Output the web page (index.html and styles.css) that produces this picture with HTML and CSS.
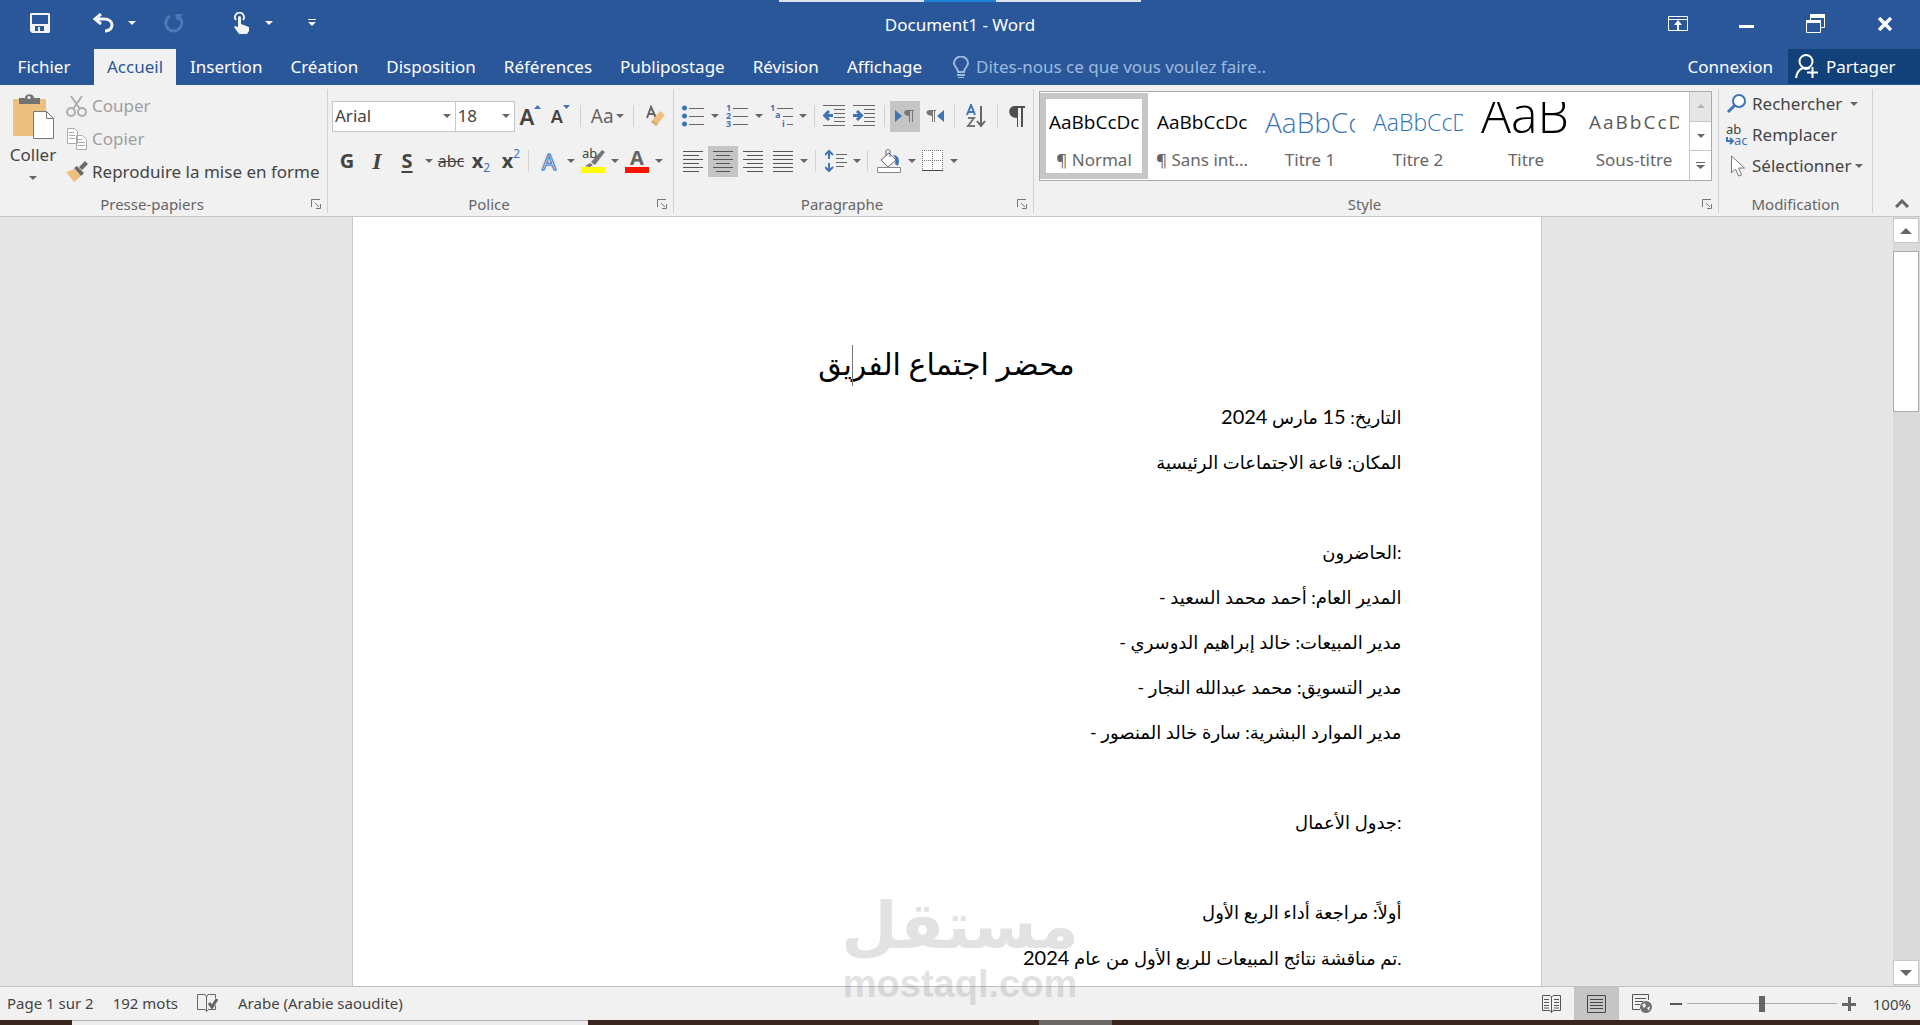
FILE: index.html
```html
<!DOCTYPE html>
<html lang="fr">
<head>
<meta charset="utf-8">
<title>Document1 - Word</title>
<link rel="stylesheet" href="styles.css">
</head>
<body>
<svg class="defs" aria-hidden="true">
  <symbol id="caret" viewBox="0 0 8 4"><path d="M0 0h8L4 4z" fill="currentColor"/></symbol>
  <symbol id="launcher" viewBox="0 0 10 10"><path d="M.5 8V.5H9M4 4l4 4M9.500 5v4.500H5" fill="none" stroke="#777"/></symbol>
</svg>

<header class="titlebar">
  <div class="peek"><i></i></div>
  <div class="quick">
    <button class="q q-save" aria-label="Enregistrer"><svg width="20" height="20" viewBox="0 0 20 20"><path fill="#f3f3f3" fill-rule="evenodd" d="M1 0h18l1 1v18l-1 1H2l-2-2V1zM2 2v9h16V2zM5 13v5h3v-4h2v4h4v-5z"/></svg></button>
    <button class="q q-undo" aria-label="Annuler"><svg width="22" height="20" viewBox="0 0 22 20"><path d="M9 1L3 6l6 5M3 6h9c11 0 10 12 1 12" fill="none" stroke="#f3f3f3" stroke-width="3"/></svg></button>
    <button class="q q-drop" aria-label="Options d'annulation"><svg width="8" height="4"><use href="#caret"/></svg></button>
    <button class="q q-redo" aria-label="Répéter" disabled><svg width="20" height="20" viewBox="0 0 20 20"><path d="M6 3a8 8 0 1 0 9 1" fill="none" stroke="#4a79b8" stroke-width="3"/><path d="M11 1h8l-6 7z" fill="#4a79b8"/></svg></button>
    <button class="q q-touch" aria-label="Mode tactile"><svg width="16" height="22" viewBox="0 0 16 22"><path d="M3 8a4.500 4.500 0 1 1 7 0" fill="none" stroke="#f3f3f3" stroke-width="2"/><path d="M5 5q1.500-2 3 0v7l8 3v4l-2 3H6l-5-7 1-1 3 1z" fill="#f3f3f3"/></svg></button>
    <button class="q q-drop2" aria-label="Options tactiles"><svg width="8" height="4"><use href="#caret"/></svg></button>
    <button class="q q-custom" aria-label="Personnaliser"><svg width="8" height="8" viewBox="0 0 8 8"><path d="M0 0h8v1H0zM0 3h8L4 7z" fill="#f3f3f3"/></svg></button>
  </div>
  <h1 class="doc-name">Document1 - Word</h1>
  <div class="window-buttons">
    <button aria-label="Options du ruban"><svg width="20" height="16" viewBox="0 0 20 16"><path d="M.5.5h19v14H.5zM0 3.500h20M10 13V6" fill="none" stroke="#fff"/><path d="M10 4l4 5h-3v5H9V9H6z" fill="#fff"/></svg></button>
    <button aria-label="Réduire"><svg width="16" height="16"><path d="M0 9h15v3H0z" fill="#fff"/></svg></button>
    <button aria-label="Restaurer"><svg width="20" height="20" viewBox="0 0 20 20"><path d="M4.500 7V1.500h14v12H15M.5 8.500h14v10H.5z" fill="none" stroke="#fff"/><path d="M4 0h15v4H4zM0 6h15v3H0z" fill="#fff"/></svg></button>
    <button aria-label="Fermer"><svg width="14" height="14"><path d="M1 1l12 12M13 1L1 13" stroke="#fff" stroke-width="3.500"/></svg></button>
  </div>
</header>

<nav class="tabs">
  <button class="tab file">Fichier</button>
  <button class="tab active">Accueil</button>
  <button class="tab">Insertion</button>
  <button class="tab">Création</button>
  <button class="tab">Disposition</button>
  <button class="tab">Références</button>
  <button class="tab">Publipostage</button>
  <button class="tab">Révision</button>
  <button class="tab">Affichage</button>
  <label class="tell"><svg width="16" height="22" viewBox="0 0 16 22"><path d="M5 16c0-4-4-5-4-9a7 6.500 0 0 1 14 0c0 4-4 5-4 9z" fill="none" stroke="#9fb9de" stroke-width="2"/><path d="M4 18h8v2H4zM5 21h6v1H5z" fill="#9fb9de"/></svg>
    <input type="text" placeholder="Dites-nous ce que vous voulez faire.." aria-label="Dites-nous ce que vous voulez faire"></label>
  <button class="connect">Connexion</button>
  <button class="share"><svg width="24" height="25" viewBox="0 0 24 25"><circle cx="11" cy="7.500" r="6.500" fill="none" stroke="#fff" stroke-width="2"/><path d="M1 24c1-7 4-9 7-10l3 1 4-1M17.500 13v11M12 18.500h11" fill="none" stroke="#fff" stroke-width="2"/></svg>Partager</button>
</nav>

<section class="ribbon">
  <section class="group g-clip">
    <div class="clip-body">
      <button class="paste"><svg width="42" height="46" viewBox="0 0 42 46"><path d="M1 5h33v37H1z" fill="#eec07f"/><path d="M7 4h6c0-5 9-5 9 0h6v6H7z" fill="#737373"/><circle cx="17" cy="3.500" r="1.500" fill="#f1f1f1"/><path d="M21.500 17.500h13l7 7v20h-20z" fill="#fff" stroke="#777"/><path d="M34.500 17.500v7h7" fill="none" stroke="#777"/></svg><span>Coller</span><svg class="car" width="8" height="4"><use href="#caret"/></svg></button>
      <div class="clip-list">
        <button class="off"><svg width="22" height="22" viewBox="0 0 22 22"><g fill="none" stroke="#adadad" stroke-width="2"><circle cx="5" cy="17" r="4"/><circle cx="16" cy="17" r="4"/><path d="M5 1l9 13M16 1L7 14"/></g></svg>Couper</button>
        <button class="off"><svg width="22" height="22" viewBox="0 0 22 22"><g fill="#fff" stroke="#ababab"><path d="M1.500.5h7l3 3v12h-10zM10.500 7.500h6l4 4v10h-10z"/><path d="M3 4.500h5M3 7.500h6M3 10.500h6M12 11.500h4M12 14.500h7M12 17.500h7"/></g></svg>Copier</button>
        <button><svg width="22" height="22" viewBox="0 0 22 22"><path d="M0 11l8-3 7 7-7 6z" fill="#eec07f"/><path d="M8 7l3-2 7 7-3 3zM13 6l6-6 3 3-6 6z" fill="#6a6a6a"/></svg>Reproduire la mise en forme</button>
      </div>
    </div>
    <footer><span>Presse-papiers</span><button class="launch" aria-label="Presse-papiers, options"><svg width="10" height="10"><use href="#launcher"/></svg></button></footer>
  </section>

  <section class="group g-font">
    <div class="row">
      <button class="combo combo-font" role="combobox" aria-label="Police" aria-expanded="false">Arial<svg width="8" height="4"><use href="#caret"/></svg></button><button class="combo combo-size" role="combobox" aria-label="Taille" aria-expanded="false">18<svg width="8" height="4"><use href="#caret"/></svg></button>
      <button class="b grow"><b>A</b><svg width="7" height="4" viewBox="0 0 7 4"><path d="M0 4h7L3.500 0z" fill="#3f74b5"/></svg></button>
      <button class="b shrink"><b>A</b><svg width="7" height="4" viewBox="0 0 7 4"><path d="M0 0h7L3.500 4z" fill="#3f74b5"/></svg></button>
      <i class="sep"></i>
      <button class="b case">Aa<svg class="car" width="8" height="4"><use href="#caret"/></svg></button>
      <i class="sep"></i>
      <button class="b wide" aria-label="Effacer la mise en forme"><svg width="20" height="22" viewBox="0 0 20 22"><path d="M1 13L5 2l5 11M2.500 9h5" fill="none" stroke="#666" stroke-width="2"/><path d="M14 6l5 4-9 11-5-4z" fill="#eec07f"/><path d="M5 17l2-2 5 4-2 2z" fill="#dcae78"/></svg></button>
    </div>
    <div class="row">
      <button class="b big"><b>G</b></button>
      <button class="b big ital"><b>I</b></button>
      <button class="b big und"><b>S</b></button>
      <button class="a" aria-label="Soulignement"><svg width="8" height="4"><use href="#caret"/></svg></button>
      <button class="b strike">abc</button>
      <button class="b big xs"><b>x</b><sub>2</sub></button>
      <button class="b big xs"><b>x</b><sup>2</sup></button>
      <i class="sep near"></i>
      <button class="b fx">A</button>
      <button class="a" aria-label="Effets"><svg width="8" height="4"><use href="#caret"/></svg></button>
      <button class="b hl"><span>ab</span><svg width="24" height="24" viewBox="0 0 24 24"><path d="M21 1l3 2-10 13-4-3zM9 14l3 2-3 2-5-1z" fill="#777"/><path d="M0 18h24v6H0z" fill="#ff0"/></svg></button>
      <button class="a" aria-label="Couleur de surbrillance"><svg width="8" height="4"><use href="#caret"/></svg></button>
      <button class="b fc"><b>A</b></button>
      <button class="a" aria-label="Couleur de police"><svg width="8" height="4"><use href="#caret"/></svg></button>
    </div>
    <footer><span>Police</span><button class="launch" aria-label="Police, options"><svg width="10" height="10"><use href="#launcher"/></svg></button></footer>
  </section>

  <section class="group g-para">
    <div class="row">
      <button class="b" aria-label="Puces"><svg width="22" height="22" viewBox="0 0 22 22"><g fill="#3f74b5"><circle cx="2.500" cy="3" r="2.500"/><circle cx="2.500" cy="11" r="2.500"/><circle cx="2.500" cy="19" r="2.500"/></g><path d="M7 3.500h15M7 11.500h15M7 19.500h15" stroke="#666"/></svg></button>
      <button class="a" aria-label="Styles de puces"><svg width="8" height="4"><use href="#caret"/></svg></button>
      <button class="b" aria-label="Numérotation"><svg class="list" width="22" height="24" viewBox="0 0 22 24"><g class="num"><text x="0" y="7">1</text><text x="0" y="15">2</text><text x="0" y="23">3</text></g><path d="M7 4.500h15M7 12.500h15M7 20.500h15" stroke="#666"/></svg></button>
      <button class="a" aria-label="Styles de numéros"><svg width="8" height="4"><use href="#caret"/></svg></button>
      <button class="b" aria-label="Liste à plusieurs niveaux"><svg class="list" width="23" height="24" viewBox="0 0 23 24"><g class="num"><text x="0" y="7">1</text><text x="5" y="14">a</text><text x="12" y="23">i</text></g><path d="M7 4.500h16M13 12.500h10M17 20.500h6" stroke="#666"/></svg></button>
      <button class="a" aria-label="Styles de liste"><svg width="8" height="4"><use href="#caret"/></svg></button>
      <i class="sep slim"></i>
      <button class="b" aria-label="Diminuer le retrait"><svg width="22" height="22" viewBox="0 0 22 22"><path d="M0 .5h22M11 4.500h11M11 8.500h11M11 12.500h11M11 16.500h11M0 20.500h22" stroke="#666"/><path d="M10 10.500H3M6 6l-4.500 4.500L6 15" fill="none" stroke="#3f74b5" stroke-width="3"/></svg></button>
      <button class="b" aria-label="Augmenter le retrait"><svg width="22" height="22" viewBox="0 0 22 22"><path d="M0 .5h22M11 4.500h11M11 8.500h11M11 12.500h11M11 16.500h11M0 20.500h22" stroke="#666"/><path d="M0 10.500h7M4 6l4.500 4.500L4 15" fill="none" stroke="#3f74b5" stroke-width="3"/></svg></button>
      <i class="sep"></i>
      <button class="b on" aria-label="De gauche à droite"><svg width="20" height="14" viewBox="0 0 20 14"><path d="M0 1v12l7-6z" fill="#3f74b5"/><path d="M12 1h7v1h-1v11h-1V2h-2v11h-1V7c-6 0-6-6-2-6z" fill="#777"/></svg></button>
      <button class="b" aria-label="De droite à gauche"><svg width="18" height="14" viewBox="0 0 18 14"><path d="M18 1v12l-7-6z" fill="#3f74b5"/><path d="M4 1h6v1H9v11H8V2H7v11H6V7c-7 0-7-6-2-6z" fill="#777"/></svg></button>
      <i class="sep slim"></i>
      <button class="b wide" aria-label="Trier"><svg width="20" height="24" viewBox="0 0 20 24"><path d="M1 11L5 1l4 10M2 8h6" fill="none" stroke="#3f74b5" stroke-width="2"/><path d="M2 14h6l-6 8h7" fill="none" stroke="#777" stroke-width="2"/><path d="M15 2v20M11 17l4 5 4-5" fill="none" stroke="#666" stroke-width="2"/></svg></button>
      <i class="sep slim"></i>
      <button class="b" aria-label="Afficher tout"><svg width="16" height="21" viewBox="0 0 16 21"><path d="M6 0h10v2h-2v19h-2V2h-3v19H8v-9c-10 0-10-12-2-12z" fill="#505050"/></svg></button>
    </div>
    <div class="row">
      <button class="b" aria-label="Aligner à gauche"><svg width="20" height="22"><path d="M0 1.500h20M0 5.500h16M0 9.500h20M0 13.500h16M0 17.500h20M0 21.500h16" stroke="#555"/></svg></button>
      <button class="b on" aria-label="Centrer"><svg width="20" height="22"><path d="M0 1.500h20M3 5.500h14M0 9.500h20M3 13.500h14M0 17.500h20M3 21.500h14" stroke="#555"/></svg></button>
      <button class="b" aria-label="Aligner à droite"><svg width="20" height="22"><path d="M0 1.500h20M4 5.500h16M0 9.500h20M4 13.500h16M0 17.500h20M4 21.500h16" stroke="#555"/></svg></button>
      <button class="b" aria-label="Justifier"><svg width="20" height="22"><path d="M0 1.500h20M0 5.500h20M0 9.500h20M0 13.500h20M0 17.500h20M0 21.500h20" stroke="#555"/></svg></button>
      <button class="a tight" aria-label="Options de justification"><svg width="8" height="4"><use href="#caret"/></svg></button>
      <i class="sep"></i>
      <button class="b" aria-label="Interligne"><svg width="22" height="24" viewBox="0 0 22 24"><path d="M4 2v8M0 6l4-4 4 4M4 14v8M0 18l4 4 4-4" fill="none" stroke="#3f74b5" stroke-width="2"/><path d="M11 5.500h11M11 9.500h8M11 13.500h11M11 17.500h8" stroke="#666"/></svg></button>
      <button class="a tight" aria-label="Options d'interligne"><svg width="8" height="4"><use href="#caret"/></svg></button>
      <i class="sep slim"></i>
      <button class="b wide" aria-label="Trame de fond"><svg width="24" height="24" viewBox="0 0 24 24"><path d="M4 11l8-7 7 7-8 7z" fill="#fff" stroke="#666"/><path d="M9 7V2c0-2 4-2 4 0v6" fill="none" stroke="#666"/><path d="M16 6c6 0 7 5 5 11l-3-2c1-4 1-6-2-9z" fill="#3f74b5"/><path d="M.5 18.500h23v5H.5z" fill="#fff" stroke="#888"/></svg></button>
      <button class="a tight" aria-label="Couleur de trame"><svg width="8" height="4"><use href="#caret"/></svg></button>
      <button class="b" aria-label="Bordures"><svg width="22" height="22" viewBox="0 0 22 22"><path d="M0 0h21v21H0z" fill="#fff"/><path d="M0 .5h21M0 10.500h21M.5 0v21M10.500 0v21M20.500 0v21" stroke="#777" stroke-dasharray="1 1"/><path d="M0 20.500h21" stroke="#444"/></svg></button>
      <button class="a tight" aria-label="Options de bordure"><svg width="8" height="4"><use href="#caret"/></svg></button>
    </div>
    <footer><span>Paragraphe</span><button class="launch" aria-label="Paragraphe, options"><svg width="10" height="10"><use href="#launcher"/></svg></button></footer>
  </section>

  <section class="group g-style">
    <div class="gallery">
      <div class="styles">
        <button class="style sel"><span class="pv">AaBbCcDc</span><span class="nm">¶ Normal</span></button>
        <button class="style"><span class="pv">AaBbCcDc</span><span class="nm">¶ Sans int...</span></button>
        <button class="style"><span class="pv t1">AaBbCc</span><span class="nm">Titre 1</span></button>
        <button class="style"><span class="pv t2">AaBbCcD</span><span class="nm">Titre 2</span></button>
        <button class="style"><span class="pv tt">AaB</span><span class="nm">Titre</span></button>
        <button class="style"><span class="pv st">AaBbCcD</span><span class="nm">Sous-titre</span></button>
      </div>
      <div class="more">
        <button class="dim" aria-label="Styles précédents"><svg width="8" height="4" viewBox="0 0 8 4"><path d="M0 4h8L4 0z" fill="#b5b5b5"/></svg></button>
        <button aria-label="Styles suivants"><svg width="8" height="4"><use href="#caret"/></svg></button>
        <button aria-label="Tous les styles"><svg width="9" height="8" viewBox="0 0 9 8"><path d="M0 0h9v1H0zM0 3h9L4.500 7z" fill="#666"/></svg></button>
      </div>
    </div>
    <footer><span>Style</span><button class="launch" aria-label="Style, options"><svg width="10" height="10"><use href="#launcher"/></svg></button></footer>
  </section>

  <section class="group g-edit">
    <div class="edit-list">
      <button><svg width="22" height="20" viewBox="0 0 22 20"><circle cx="13" cy="7" r="6" fill="#fff" stroke="#3f74b5" stroke-width="2"/><path d="M9 11l-7 7" stroke="#3f74b5" stroke-width="3"/></svg>Rechercher<svg class="car gap" width="8" height="4"><use href="#caret"/></svg></button>
      <button><svg width="22" height="22" viewBox="0 0 22 22"><g class="rep"><text x="0" y="10" fill="#444">ab</text><text x="8" y="21" fill="#3f74b5">ac</text></g><path d="M1 13v4h5M4 14l3 3-3 3" fill="none" stroke="#3f74b5" stroke-width="2"/></svg>Remplacer</button>
      <button><svg width="22" height="22" viewBox="0 0 22 22"><path d="M5.500 1v17l4-4 3 7 3-1-3-7h6z" fill="#fff" stroke="#777"/></svg>Sélectionner<svg class="car" width="8" height="4"><use href="#caret"/></svg></button>
    </div>
    <footer><span>Modification</span></footer>
  </section>
  <button class="collapse" aria-label="Réduire le ruban"><svg width="14" height="9"><path d="M1 8l6-6 6 6" fill="none" stroke="#666" stroke-width="3"/></svg></button>
</section>

<main class="workspace">
  <div class="canvas">
    <article class="page">
      <h2 lang="ar">محضر اجتماع الفر<span class="cursor"></span>يق</h2>
      <p lang="ar">التاريخ: <span class="n">15</span> مارس <span class="n">2024</span></p>
      <p lang="ar">المكان: قاعة الاجتماعات الرئيسية</p>
      <p><br></p>
      <p lang="ar">الحاضرون:</p>
      <p lang="ar">- المدير العام: أحمد محمد السعيد</p>
      <p lang="ar">- مدير المبيعات: خالد إبراهيم الدوسري</p>
      <p lang="ar">- مدير التسويق: محمد عبدالله النجار</p>
      <p lang="ar">- مدير الموارد البشرية: سارة خالد المنصور</p>
      <p><br></p>
      <p lang="ar">جدول الأعمال:</p>
      <p><br></p>
      <p lang="ar">أولاً: مراجعة أداء الربع الأول</p>
      <p lang="ar">تم مناقشة نتائج المبيعات للربع الأول من عام <span class="n">2024</span>.</p>
    </article>
  </div>
  <div class="scroll">
    <button aria-label="Haut"><svg width="12" height="6" viewBox="0 0 12 6"><path d="M0 6h12L6 0z" fill="#666"/></svg></button>
    <div class="thumb"></div>
    <button aria-label="Bas"><svg width="12" height="6" viewBox="0 0 12 6"><path d="M0 0h12L6 6z" fill="#666"/></svg></button>
  </div>
</main>

<footer class="status">
  <span>Page 1 sur 2</span>
  <span>192 mots</span>
  <svg width="22" height="18" viewBox="0 0 22 18"><path d="M9.500 17V3L8 .5H.5v15H8l1.500 2 1.500-2h7.500v-4M9.500 3L11 .5h7.500V4" fill="none" stroke="#666"/><path d="M12 9l3 4 5-8" fill="none" stroke="#666" stroke-width="3"/></svg>
  <span>Arabe (Arabie saoudite)</span>
  <div class="tools">
    <button class="view" aria-label="Mode Lecture"><svg width="20" height="18" viewBox="0 0 20 18"><path d="M9.500 17.500V2L8 .5H.5v15H8l1.500 2 1.500-2h7.500V.5H11L9.500 2M2 4.500h5M2 7.500h5M2 10.500h5M2 13h5M12 4.500h5M12 7.500h5M12 10.500h5M12 13h5" fill="none" stroke="#555"/></svg></button>
    <button class="view on" aria-label="Page"><svg width="20" height="18" viewBox="0 0 20 18"><path d="M.5.5h18v17H.5zM3 4.500h13M3 7.500h13M3 10.500h13M3 13.500h13" fill="none" stroke="#444"/></svg></button>
    <button class="view" aria-label="Web"><svg width="20" height="19" viewBox="0 0 20 19"><path d="M8 15.500H.5V.5h16V6M3 4.500h11M3 7.500h8M3 10.500h5" fill="none" stroke="#555"/><circle cx="14" cy="13" r="6" fill="#707070"/><path d="M10 11l3-2 1 3-2 2zM15 14l3-2-1 5z" fill="#f1f1f1"/></svg></button>
    <button class="z" aria-label="Zoom arrière"><svg width="12" height="12"><path d="M0 5h12v2H0z" fill="#555"/></svg></button>
    <input class="zoom" type="range" min="0" max="200" value="100" aria-label="Zoom">
    <button class="z" aria-label="Zoom avant"><svg width="14" height="14"><path d="M0 6h14v3H0zM6 0h3v14H6z" fill="#666"/></svg></button>
    <span class="pct">100%</span>
  </div>
</footer>
<div class="desktop"><i class="win"></i><i class="bar"></i></div>
<div class="watermark"><span class="wm-ar" lang="ar">مستقل</span><span class="wm-en">mostaql.com</span></div>
</body>
</html>
```
FILE: styles.css
```css
* { box-sizing: border-box; }
body {
  margin: 0;
  height: 100vh;
  display: flex;
  flex-direction: column;
  overflow: hidden;
  position: relative;
  background: #e6e6e6;
  color: #444;
  font: 17px/24px "Noto Sans", "Open Sans", sans-serif;
}
button, input { font: inherit; color: inherit; background: none; border: 0; padding: 0; margin: 0; }
button { display: flex; align-items: center; justify-content: center; white-space: nowrap; }
svg { flex: none; display: block; }
.defs { position: absolute; width: 0; height: 0; }

/* Title bar */
.titlebar {
  height: 49px;
  flex: none;
  display: grid;
  grid-template-columns: 1fr auto 1fr;
  align-items: center;
  background: #2a579a;
  color: #fff;
  position: relative;
}
.peek { position: absolute; top: 0; left: 50%; margin-left: -181px; width: 362px; height: 2px; background: #dde3ea; }
.peek i { display: block; width: 72px; height: 2px; margin: 0 auto; background: #1b83d9; }
.quick { display: flex; align-items: center; padding-left: 24px; padding-bottom: 4px; color: #f3f3f3; }
.q { height: 32px; }
.q-save { width: 31px; }
.q-undo { width: 60px; margin-left: 18px; }
.q-drop, .q-drop2 { width: 24px; }
.q-drop { margin-left: -13px; }
.q-redo { width: 40px; margin-left: 10px; }
.q-touch { width: 40px; margin-left: 27px; }
.q-drop2 { margin-left: -4px; }
.q-custom { width: 30px; margin-left: 16px; }
.doc-name { margin: 0; font-size: 17px; line-height: 24px; font-weight: 400; }
.window-buttons { display: flex; justify-content: flex-end; padding: 0 1px 2px 0; }
.window-buttons button { width: 69px; height: 40px; }

/* Tabs */
.tabs { height: 36px; flex: none; display: flex; background: #2a579a; color: #fff; }
.tab { padding: 0 14px; }
.tab.file { width: 88px; margin-right: 6px; }
.tab.active { background: #f1f1f1; color: #2a579a; padding: 0 13px; }
.tell { display: flex; align-items: center; gap: 7px; margin-left: 17px; flex: 1; }
.tell input { width: 300px; }
.tell input::placeholder { color: #9fb9de; opacity: 1; }
.connect { padding: 0 15px; }
.share { width: 132px; height: 35px; background: #124078; gap: 7px; justify-content: flex-start; padding-left: 7px; }

/* Ribbon */
.ribbon { height: 132px; flex: none; display: flex; background: #f1f1f1; border-bottom: 1px solid #c6c6c6; padding: 4px 0 3px; }
.group { display: flex; flex-direction: column; border-right: 1px solid #d2d2d2; }
.group footer { margin-top: auto; height: 18px; display: flex; align-items: center; font-size: 15px; line-height: 18px; color: #666; }
.group footer span { flex: 1; text-align: center; }
.launch { width: 23px; height: 16px; }
.g-clip { width: 328px; }
.g-font { width: 346px; padding-left: 4px; }
.g-para { width: 360px; padding-left: 4px; }
.g-font footer, .g-para footer { margin-left: -4px; }
.g-style { flex: 1; min-width: 0; }
.g-edit { width: 154px; }
.car { color: #666; }

.clip-body { display: flex; }
.paste { width: 66px; flex-direction: column; padding-top: 5px; justify-content: flex-start; }
.paste span { line-height: 30px; }
.paste .car { margin-top: 6px; }
.clip-list { display: flex; flex-direction: column; }
.clip-list button { height: 33px; gap: 4px; justify-content: flex-start; }
.off { color: #a0a0a0; }

.row { display: flex; height: 45px; align-items: center; padding-top: 9px; }
.row svg { color: #666; }
.b { width: 30px; height: 31px; }
.b.wide { width: 34px; }
.a { width: 14px; height: 31px; }
.a.tight { width: 12px; }
.on { background: #c5c5c5; }
.sep { width: 1px; height: 22px; background: #d2d2d2; margin: 0 5px; }
.sep.slim { margin: 0 4px; }
.sep.near { margin: 0 5px 0 2px; }
.combo { height: 31px; background: #fff; border: 1px solid #c6c6c6; justify-content: space-between; padding: 0 4px 0 2px; }
.combo-font { width: 124px; }
.combo-size { width: 60px; border-left: 0; }
.grow b { font-size: 22px; }
.shrink b { font-size: 18px; }
.grow b, .shrink b { font-weight: 600; }
.grow svg, .shrink svg { margin-bottom: 18px; }
.b.case { width: 42px; font-size: 19px; gap: 2px; color: #666; }
.big { font-size: 20px; }
.ital { font-family: "Liberation Serif", serif; font-style: italic; font-size: 24px; }
.und { text-decoration: underline; text-underline-offset: 3px; }
.strike { font-size: 16px; text-decoration: line-through; }
.xs sub, .xs sup { font-size: 12px; line-height: 12px; color: #3f74b5; }
.xs sub { margin-top: 14px; }
.xs sup { margin-bottom: 14px; }
.fx { font-size: 22px; color: #fff; -webkit-text-stroke: 1px #3f74b5; text-shadow: 0 0 3px #8fb4e0; }
.hl { position: relative; }
.hl span { position: absolute; top: 0; left: 4px; font-size: 13px; line-height: 14px; }
.fc { position: relative; font-size: 20px; align-items: flex-start; line-height: 24px; color: #666; }
.fc::after { content: ""; position: absolute; left: 3px; right: 3px; bottom: 4px; height: 6px; background: #fb1300; }
.list { overflow: visible; }
.num text { font: bold 9px "Noto Sans", sans-serif; fill: #3f74b5; }
.rep text { font: 13px "Noto Sans", sans-serif; }

.gallery { margin: 2px 6px 0 5px; height: 90px; display: flex; border: 1px solid #ababab; background: #fff; }
.styles { flex: 1; display: flex; overflow: hidden; }
.style { width: 108px; flex: none; height: 86px; margin-top: 1px; flex-direction: column; border: 6px solid transparent; padding: 3px 3px 0; justify-content: flex-start; }
.style.sel { border-color: #c6c6c6; }
.pv { width: 90px; height: 41px; margin-bottom: 5px; overflow: hidden; text-align: left; color: #000; font: 19px/41px "Open Sans", sans-serif; }
.pv.t1 { font-size: 28px; font-weight: 300; color: #3f74b5; }
.pv.t2 { font-size: 23px; font-weight: 300; color: #2e74b5; }
.pv.tt { font-size: 50px; line-height: 25px; font-weight: 300; }
.pv.st { letter-spacing: 2px; color: #5a5a5a; }
.nm { color: #666; line-height: 24px; }
.more { width: 22px; display: flex; flex-direction: column; border-left: 1px solid #c6c6c6; color: #666; }
.more button { flex: 1; border-bottom: 1px solid #c6c6c6; }
.more .dim { background: #e6e6e6; }
.more button:last-child { border-bottom: 0; }

.edit-list { padding-left: 7px; margin-top: -1px; }
.edit-list button { height: 31px; gap: 4px; }
.edit-list .gap { margin-left: 4px; }
.collapse { width: 47px; align-self: flex-end; height: 20px; padding-left: 11px; }

/* Document */
.workspace { flex: 1; min-height: 0; display: flex; }
.canvas { flex: 1; overflow: hidden; display: flex; justify-content: center; }
.page { width: 1190px; height: 1400px; background: #fff; border: 1px solid #c6c6c6; border-top: 0; padding: 120px 139px 0; color: #000; text-align: right; font: 18px/45px Lato, "DejaVu Sans", sans-serif; }
.page h2 { margin: 0 0 5px; font-size: 30px; line-height: 52px; font-weight: 400; text-align: center; }
.page p { margin: 0; }
.page .n { font-size: 20px; }
.cursor { position: relative; }
.cursor::after { content: ""; position: absolute; top: 0; left: 0; width: 1px; height: 41px; background: #777; }
.scroll { width: 27px; display: flex; flex-direction: column; background: #dadada; padding: 1px 1px 1px 0; }
.scroll button { height: 25px; flex: none; background: #fff; border: 1px solid #c6c6c6; }
.thumb { height: 161px; margin: 8px 0 auto; background: #fff; border: 1px solid #ababab; }

/* Status bar */
.status { height: 34px; flex: none; display: flex; align-items: center; background: #f1f1f1; border-top: 1px solid #c0c0c0; padding: 0 9px 0 7px; font-size: 15px; line-height: 22px; gap: 19px; }
.status > span, .status > svg { margin-bottom: 2px; }
.tools { display: flex; align-self: stretch; align-items: center; margin-left: auto; }
.view { width: 45px; align-self: stretch; }
.z { width: 23px; height: 20px; }
.pct { width: 51px; text-align: right; white-space: nowrap; }
.zoom { width: 150px; appearance: none; height: 16px; }
.zoom::-webkit-slider-runnable-track { height: 16px; background: linear-gradient(#ababab, #ababab) center / 100% 1px no-repeat; }
.zoom::-webkit-slider-thumb { appearance: none; width: 6px; height: 16px; background: #666; }
.desktop { height: 5px; flex: none; background: #38261f; display: flex; }
.win { width: 516px; margin-left: 72px; background: #ededed; border-top: 1px solid #b5b5b5; }
.bar { width: 73px; margin-left: 451px; background: #6b6865; }

.watermark { position: absolute; left: 844px; bottom: 21px; width: 232px; display: flex; flex-direction: column; align-items: center; color: #808080; opacity: .22; pointer-events: none; font-weight: 700; }
.wm-ar { font: bold 65px/76px "DejaVu Sans", sans-serif; }
.wm-en { font: bold 38px/40px "Liberation Sans", sans-serif; }
```
